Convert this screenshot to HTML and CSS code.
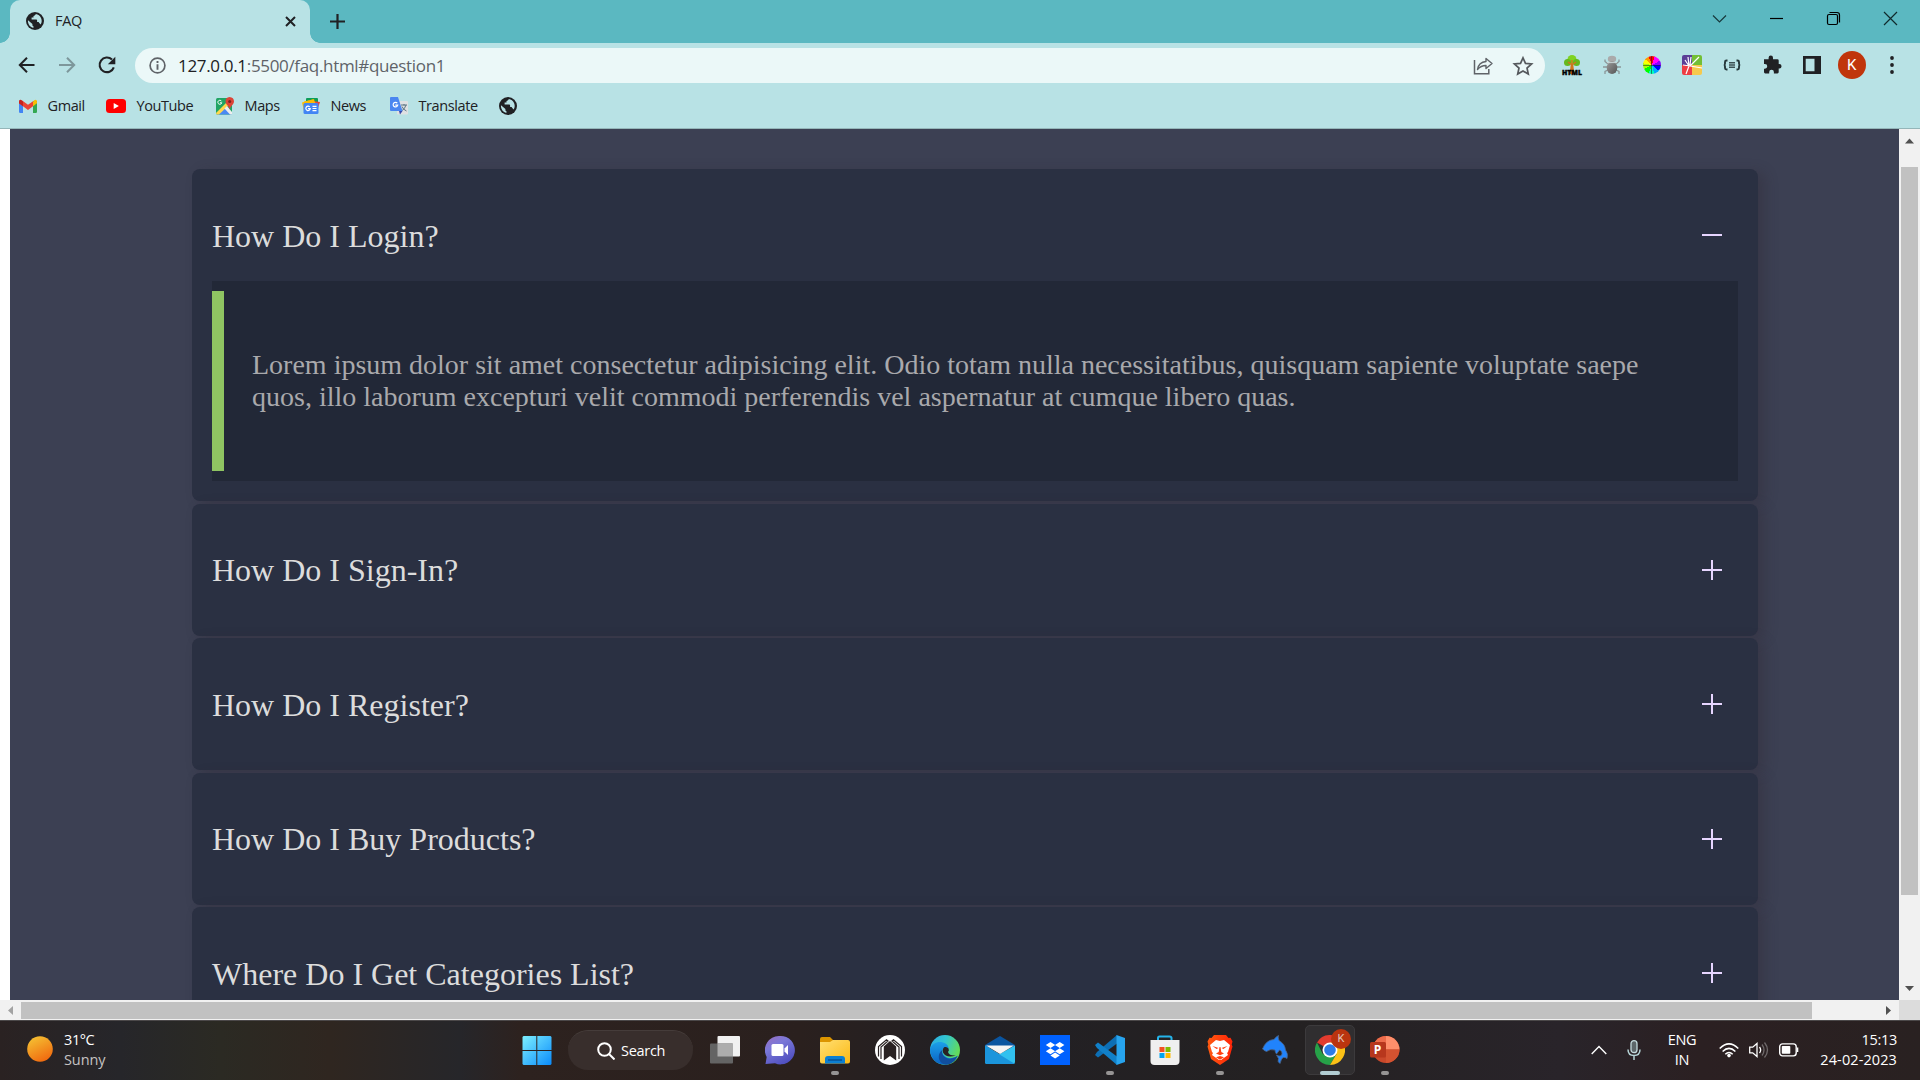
FILE: index.html
```html
<!DOCTYPE html>
<html lang="en">
<head>
<meta charset="utf-8">
<title>FAQ</title>
<link rel="stylesheet" href="styles.css">
</head>
<body>
<svg class="defs" width="0" height="0">
  <defs>
    <symbol id="globe" viewBox="0 0 18 18">
      <circle cx="9" cy="9" r="9" fill="#202124"/>
      <path d="M9.8 2c-.3 1.200-1.300 1.700-2.300 1.900v1.700H5.600v1.900h4.700c.5 0 .8.400.8.900v1.700h1c.6 0 1 .500 1.100 1l1.500 1.500A7.100 7.100 0 0 0 9.800 2zM2 8.200 6.400 12v1c0 .6.400 1 1 1v2A7 7 0 0 1 2 8.200z" fill="#b8e2e5"/>
    </symbol>
    <linearGradient id="win" x1="0" y1="0" x2="1" y2="1"><stop offset="0" stop-color="#7df0ff"/><stop offset="1" stop-color="#0a8bfb"/></linearGradient>
    <linearGradient id="sun" x1=".2" y1="0" x2=".7" y2="1"><stop offset="0" stop-color="#f5c233"/><stop offset="1" stop-color="#f0670e"/></linearGradient>
    <linearGradient id="chat" x1="0" y1="0" x2=".6" y2="1"><stop offset="0" stop-color="#9a6fc0"/><stop offset=".4" stop-color="#7b78d8"/><stop offset="1" stop-color="#5050c0"/></linearGradient>
    <linearGradient id="fold" x1="0" y1="0" x2="1" y2="1"><stop offset="0" stop-color="#ffdf73"/><stop offset="1" stop-color="#fcb914"/></linearGradient>
    <linearGradient id="edgeTop" x1="0" y1="0" x2="1" y2=".4"><stop offset="0" stop-color="#2ba9e8"/><stop offset=".5" stop-color="#32c5d0"/><stop offset="1" stop-color="#63dc5a"/></linearGradient>
    <linearGradient id="edgeLow" x1="0" y1="0" x2="0" y2="1"><stop offset="0" stop-color="#1ca0e8"/><stop offset="1" stop-color="#0a62c4"/></linearGradient>
    <linearGradient id="lion" x1="0" y1="0" x2="1" y2="0"><stop offset="0" stop-color="#ff5a10"/><stop offset="1" stop-color="#ff2408"/></linearGradient>
    <linearGradient id="bug" x1="0" y1="0" x2="1" y2="1"><stop offset="0" stop-color="#999"/><stop offset="1" stop-color="#555"/></linearGradient>
  </defs>
</svg>

<header class="chrome">
  <div class="tabstrip">
    <div class="tab">
      <svg class="favicon" width="18" height="18"><use href="#globe"/></svg>
      <span class="tab-title">FAQ</span>
      <svg width="11" height="11" viewBox="0 0 11 11"><path d="M1 1l9 9M10 1l-9 9" stroke="#202124" stroke-width="2"/></svg>
    </div>
    <svg class="newtab" width="15" height="15" viewBox="0 0 15 15"><path d="M7.500 0v15M0 7.500h15" stroke="#202124" stroke-width="2.200"/></svg>
    <div class="winctl">
      <svg width="57" height="37" viewBox="0 0 57 37"><path d="M22 15.500l6.500 6.500 6.500-6.500" fill="none" stroke="#17383b" stroke-width="1.200"/></svg>
      <svg width="57" height="37" viewBox="0 0 57 37"><path d="M22 18.500h13" stroke="#000" stroke-width="1.200"/></svg>
      <svg width="57" height="37" viewBox="0 0 57 37"><g fill="none" stroke="#000" stroke-width="1.200"><rect x="22.500" y="14.500" width="10" height="10" rx="1.500"/><path d="M24.500 12.500h7.500q2.500 0 2.500 2.500v7.500"/></g></svg>
      <svg width="57" height="37" viewBox="0 0 57 37"><path d="M22 12l13 13M35 12L22 25" stroke="#102a2c" stroke-width="1.200"/></svg>
    </div>
  </div>

  <div class="toolbar">
    <div class="nav">
      <svg width="40" height="40" viewBox="0 0 40 40"><path d="M27.500 20H13M20 12.800L12.800 20l7.200 7.200" fill="none" stroke="#202124" stroke-width="2"/></svg>
      <svg width="40" height="40" viewBox="0 0 40 40"><path d="M12 20h14.500M20 12.800l7.200 7.200-7.200 7.200" fill="none" stroke="#7d979b" stroke-width="2"/></svg>
      <svg width="40" height="40" viewBox="0 0 40 40"><path d="M26.800 22.300A7.300 7.300 0 1 1 25 14.600" fill="none" stroke="#202124" stroke-width="2.100"/><path d="M28.300 11.700v7.500h-7.500z" fill="#202124"/></svg>
    </div>
    <div class="omnibox">
      <svg width="17" height="17" viewBox="0 0 17 17"><circle cx="8.500" cy="8.500" r="7.400" fill="none" stroke="#5f6368" stroke-width="1.700"/><path d="M8.500 4.100v1.900M8.500 7.300v5.500" stroke="#5f6368" stroke-width="1.900"/></svg>
      <span class="url"><b>127.0.0.1</b>:5500/faq.html#question1</span>
      <svg width="40" height="35" viewBox="0 0 40 35"><path d="M11.500 12v13.800h14.300V21" fill="none" stroke="#5f6368" stroke-width="1.500"/><path d="M14.500 21.500c.8-5 4.500-7.700 8.500-8v-3l6 5-6 5v-3c-3.500 0-6 1-8.500 4z" fill="none" stroke="#5f6368" stroke-width="1.400" stroke-linejoin="round"/></svg>
      <svg width="40" height="35" viewBox="0 0 40 35"><path d="M20 9.800l2.500 5.600 6.100.6-4.600 4 1.300 6L20 22.900 14.700 26l1.300-6-4.600-4 6.100-.6z" fill="none" stroke="#55595d" stroke-width="1.700"/></svg>
    </div>
    <div class="extensions">
      <svg viewBox="0 0 40 40"><path d="M18.700 20h2.600l1.200 9h-5z" fill="#d8781d"/><circle cx="20" cy="14.500" r="4.500" fill="#7ed321"/><circle cx="15.500" cy="17.500" r="3.500" fill="#65b81c"/><circle cx="24.500" cy="17.500" r="3.500" fill="#65b81c"/><path d="M20 24v-9M20 20l4-3M20 20l-4-3" stroke="#cf731d" stroke-width="1.300"/><text x="10" y="29.500" textLength="20" lengthAdjust="spacingAndGlyphs" class="html-label">HTML</text></svg>
      <svg viewBox="0 0 40 40"><g fill="none" stroke="#8b9698" stroke-width="1.300"><path d="M16 19l-3-2.500v-2M24 19l3-2.500v-2M15 22h-4M25 22h4M16 25l-3 1.500v2.500M24 25l3 1.500v2.500"/></g><ellipse cx="20" cy="14" rx="4.200" ry="3.200" fill="#aaa"/><ellipse cx="20" cy="22.800" rx="5.300" ry="6.200" fill="url(#bug)"/><path d="M15 17.600h10" stroke="#c9d5d7" stroke-width="1"/></svg>
      <div class="ext-cell"><div class="wheel"></div></div>
      <svg viewBox="0 0 40 40"><path d="M10 20v-8q0-2 2-2h8v10z" fill="#5b3f96"/><path d="M20 10h8q2 0 2 2v8H20z" fill="#72bf35"/><path d="M10 20h10v10h-8q-2 0-2-2z" fill="#ee3d43"/><path d="M20 20h10v8q0 2-2 2h-8z" fill="#f6c94c"/><path d="M17 21l-1-9M18 20l1-8M17 21l-4-6M18 21l9-9M18 21l12 2M17 21l-3 8M18 21l-7-1" stroke="#fff" stroke-width="1.200"/></svg>
      <svg viewBox="0 0 40 40"><path d="M15.500 15.500h-1q-1.500 0-1.500 1.500v1.500q0 1.500-1.200 1.500 1.200 0 1.200 1.500V23q0 1.500 1.500 1.500h1M24.500 15.500h1q1.500 0 1.500 1.500v1.500q0 1.500 1.200 1.500-1.200 0-1.200 1.500V23q0 1.500-1.500 1.500h-1" fill="none" stroke="#26383b" stroke-width="1.900"/><path d="M17 17.800h6M17 20h6M17 22.300h6" stroke="#3b5053" stroke-width="1.400"/></svg>
      <svg viewBox="0 0 40 40"><path d="M12 14.200h4.600v-1.400a2.200 2.200 0 0 1 4.400 0v1.400h4.400q1.300 0 1.300 1.300V19h.6a2.200 2.200 0 0 1 0 4.500h-.6v3.600q0 1.300-1.300 1.300h-3.500V27a2.200 2.200 0 0 0-4.700 0v1.400h-3.900q-1.300 0-1.300-1.300v-3.400h.9a2.300 2.300 0 0 0 0-4.700H12z" fill="#202124"/></svg>
      <svg viewBox="0 0 40 40"><path d="M11 11h18v18H11zM13.700 13.700v12.600h8.800V13.700z" fill="#202124" fill-rule="evenodd"/></svg>
      <div class="ext-cell"><div class="avatar">K</div></div>
      <svg viewBox="0 0 40 40"><g fill="#202124"><circle cx="20" cy="13" r="1.900"/><circle cx="20" cy="20" r="1.900"/><circle cx="20" cy="27" r="1.900"/></g></svg>
    </div>
  </div>

  <nav class="bookmarks">
    <div class="bm gmail"><svg width="18" height="18" viewBox="0 0 18 18"><path d="M0 4h4v12H1.200Q0 16 0 14.800z" fill="#4285f4"/><path d="M14 4h4v10.800q0 1.200-1.200 1.200H14z" fill="#34a853"/><path d="M14 4.500l1.200-1.300Q18 1.600 18 5v1.200l-4 3z" fill="#fbbc04"/><path d="M0 6.200V5q0-3.400 2.800-1.800L9 7.800l5-3.600v5L9 13 4 9.200z" fill="#ea4335"/><path d="M0 6.200V5q0-2 1.500-2.200L4 4.500v4.700z" fill="#c5221f"/></svg><span>Gmail</span></div>
    <div class="bm youtube"><svg width="20" height="18" viewBox="0 0 20 18"><rect y="2" width="20" height="14" rx="3.500" fill="#f00"/><path d="M7.700 6v6l5.200-3z" fill="#fff"/></svg><span>YouTube</span></div>
    <div class="bm maps"><svg width="18" height="18" viewBox="0 0 18 18"><rect y="1" width="16" height="16.500" rx="1.500" fill="#1fa463"/><path d="M1 17.500L8.500 9l7.500 8.500z" fill="#4a89f3"/><path d="M0 16L12 4l2.500 2.500L3 17.500H1.500Q0 17.500 0 16z" fill="#ffd84d"/><path d="M8.500 11.500L11 9l5 6v2.500h-2z" fill="#eee"/><path d="M13.500 0Q18 .3 18 4.500c0 3-3.700 4.500-4.300 8-.6-3.500-4.200-5-4.200-8Q9.500.3 13.500 0z" fill="#dc4437"/><circle cx="13.700" cy="4.500" r="1.500" fill="#7b231e"/><path d="M5.600 4.300a2 2 0 1 0 .2 1.500H4" fill="none" stroke="#fff"/></svg><span>Maps</span></div>
    <div class="bm news"><svg width="18" height="18" viewBox="0 0 18 18"><rect x="4" y="1" width="12" height="8" rx="1" fill="#0c9d58"/><path d="M0 5.500l12-3.500 2 9-12 3z" fill="#ffbd00"/><path d="M7 3.500l11 1.500-3 9-8-3z" fill="#ea4335"/><path d="M2 4.500l9-2 3 4-11 2z" fill="#fbbc04"/><rect x="1.500" y="6" width="15" height="11" rx="1.500" fill="#4285f4"/><path d="M10.500 9.300h4M10.500 11.500h4M10.500 13.700h4" stroke="#fff" stroke-width="1.200"/><path d="M7.700 9.900a2.200 2.200 0 1 0 .5 1.800H6" fill="none" stroke="#fff" stroke-width="1.200"/></svg><span>News</span></div>
    <div class="bm translate"><svg width="18" height="18" viewBox="0 0 18 18"><rect x="7" y="4" width="11" height="13.500" rx="1" fill="#dfe1e3"/><path d="M11 8h6M14 7v1.500M16 8q-1 4-4.500 6M12 9.500q1 3 4.500 4.500" stroke="#5b7582" fill="none"/><path d="M1 0h7l4.500 14H1q-1 0-1-1V1q0-1 1-1z" fill="#4a86f0"/><path d="M9 14h3.500L10 17.500z" fill="#3849ab"/><path d="M7.300 6.200a2.300 2.300 0 1 0 .4 2H5.300" fill="none" stroke="#fff" stroke-width="1.200"/></svg><span>Translate</span></div>
    <svg width="18" height="18"><use href="#globe"/></svg>
  </nav>
</header>

<div class="viewport">
  <div class="gutter"></div>
  <main class="page">
    <section class="faq">
      <article class="card open">
        <h2 class="question">How Do I Login?<i class="toggle minus"></i></h2>
        <div class="answer"><p>Lorem ipsum dolor sit amet consectetur adipisicing elit. Odio totam nulla necessitatibus, quisquam sapiente voluptate saepe<br>quos, illo laborum excepturi velit commodi perferendis vel aspernatur at cumque libero quas.</p></div>
      </article>
      <article class="card"><h2 class="question">How Do I Sign-In?<i class="toggle"></i></h2></article>
      <article class="card"><h2 class="question">How Do I Register?<i class="toggle"></i></h2></article>
      <article class="card"><h2 class="question">How Do I Buy Products?<i class="toggle"></i></h2></article>
      <article class="card"><h2 class="question">Where Do I Get Categories List?<i class="toggle"></i></h2></article>
    </section>
  </main>
  <div class="vscroll">
    <svg width="21" height="38" viewBox="0 0 21 38"><path d="M6 14.500l4.500-5 4.500 5z" fill="#505050"/></svg>
    <div class="vthumb"></div>
    <svg class="down" width="21" height="24" viewBox="0 0 21 24"><path d="M6 10l4.500 5 4.500-5z" fill="#505050"/></svg>
  </div>
</div>
<div class="hscroll">
  <svg width="21" height="20" viewBox="0 0 21 20"><path d="M13 6v9l-5-4.500z" fill="#a3a3a3"/></svg>
  <div class="hthumb"></div>
  <svg class="right" width="21" height="20" viewBox="0 0 21 20"><path d="M8 6v9l5-4.500z" fill="#505050"/></svg>
  <div class="corner"></div>
</div>

<footer class="taskbar">
  <div class="weather">
    <svg width="26" height="26" viewBox="0 0 26 26"><circle cx="13" cy="13" r="12.800" fill="url(#sun)"/></svg>
    <div class="weather-text"><span>31°C</span><span class="muted">Sunny</span></div>
  </div>
  <div class="apps">
    <div class="app"><svg viewBox="0 0 30 30"><path d="M1.500 1H14.300v14H.5V2zM15.300 1h13.200l1 1v13H15.300zM.5 16h13.800v14H1.500l-1-1zM15.300 16h14.200v13l-1 1H15.300z" fill="url(#win)"/></svg></div>
    <div class="search"><svg width="18" height="18" viewBox="0 0 18 18"><circle cx="7.500" cy="7.500" r="6.300" fill="none" stroke="#fff" stroke-width="2"/><path d="M12 12l5.500 5.500" stroke="#fff" stroke-width="2"/></svg><span>Search</span></div>
    <div class="app"><svg viewBox="0 0 30 30"><rect x="7.500" y="1" width="22.500" height="20.500" rx="1" fill="#f1f1f1"/><rect y="8.500" width="23" height="20" rx="1" fill="#646464"/><path d="M7.500 8.500H23v13H7.500z" fill="#adadad"/></svg></div>
    <div class="app"><svg viewBox="0 0 30 30"><path d="M15 1a14.200 14.200 0 1 1-5 27.200L.5 29l1.200-7A14.200 14.200 0 0 1 15 1z" fill="url(#chat)"/><rect x="6.500" y="9" width="12" height="12" rx="1.500" fill="#fff"/><path d="M19.500 13.500l3.500-3.500v10l-3.500-3.500z" fill="#fff"/></svg></div>
    <div class="app running"><svg viewBox="0 0 30 30"><path d="M0 4q0-2 2-2h8l3 3h0v8H0z" fill="#dc9500"/><path d="M0 7h10l3-2h15q2 0 2 2v19.500q0 2-2 2H2q-2 0-2-2z" fill="url(#fold)"/><path d="M5 28.500V24q0-3 3-3h14q3 0 3 3v4.500z" fill="#0c7fd2"/><path d="M8 25h14" stroke="#064b8f" stroke-width="1.300"/></svg></div>
    <div class="app"><svg viewBox="0 0 30 30"><circle cx="15" cy="15" r="15" fill="#fff"/><path d="M8.800 25.500V11.500L15 6l6.200 5.500v14L15 21z" fill="#292223"/><path d="M3.500 21.500V11.500L11.500 4.800 13 6 6 12v12M26.500 21.500V11.500L18.500 4.800 17 6l7 6v12" stroke="#292223" stroke-width="1.200" fill="none"/></svg></div>
    <div class="app"><svg viewBox="0 0 30 30"><circle cx="15" cy="15" r="15" fill="url(#edgeTop)"/><path d="M0 14C2 8 8 6 13 7.500c4.500 1.300 6 4.500 5.500 6.500-1.500-2-5-2-6 1-1.400 5 5 9 9 8 3-.3 5-1.500 6.500-2.500C24 29.500 15 31 9 28.500 3 26 0 20 0 14z" fill="url(#edgeLow)"/><path d="M12.200 15c-1.300 6 4.500 9.500 9 8.500 2.800-.3 4.800-1.500 6.300-2.500-2 5-7 8.500-11.500 8.800C9 29 6 20 12.200 15z" fill="#104e9e"/><path d="M18 17q1.500-1.500.5-3.500-1.500-2.200-4-1.400-2.500 1.900-1.500 5.400 3 6 13 3-7 .500-8-3.500z" fill="#292223"/></svg></div>
    <div class="app"><svg viewBox="0 0 30 30"><path d="M0 10L15 1l15 9v3H0z" fill="#0a55a0"/><path d="M0 10.500l15 9-15 8z" fill="#34b9ea"/><path d="M30 10.500V27q0 2-2 2H2q-2 0-2-2z" fill="#31c1ef"/><path d="M0 10.500L30 29H2q-2 0-2-2z" fill="#1b95dc"/><path d="M1 10.500h28L15 19z" fill="#f4f4f4"/></svg></div>
    <div class="app"><svg viewBox="0 0 30 30"><path d="M0 0h30v30H0z" fill="#0061fe"/><path d="M10.500 7l4.700 3-4.700 3-4.700-3zM19.700 7l4.700 3-4.700 3-4.700-3zM10.500 13.200l4.700 3-4.700 3-4.700-3zM19.700 13.200l4.700 3-4.700 3-4.700-3zM15.100 17.500l4.700 3-4.700 3-4.700-3z" fill="#fff"/></svg></div>
    <div class="app running"><svg viewBox="0 0 30 30"><path d="M22 8.500L3 22.500 0 20l2-3L22 0z" fill="#0d6fb5"/><path d="M22 21.500L3 7.500 0 10l2 3 20 17z" fill="#1180c9"/><path d="M21.500 0L30 3v24l-8.500 3z" fill="#27a4ee"/></svg></div>
    <div class="app"><svg viewBox="0 0 30 30"><path d="M8 6V3q0-1.500 1.500-1.500h10Q21.500 1.500 21.500 3v3" fill="none" stroke="#25b4ea" stroke-width="2"/><path d="M.5 5h29v21q0 4-4 4h-21q-4 0-4-4z" fill="#efefef"/><path d="M9.500 12h5v5h-5z" fill="#f25022"/><path d="M15.500 12h5v5h-5z" fill="#7fba00"/><path d="M9.500 18h5v5h-5z" fill="#00a4ef"/><path d="M15.500 18h5v5h-5z" fill="#ffb900"/></svg></div>
    <div class="app running"><svg viewBox="0 0 30 30"><path d="M9 0h12l2.500 3 2-.3 2 3.800-.8 3 .8 2-3.500 12.500L15 30l-9-6-3.500-12.500.8-2-.8-3 2-3.800 2 .3z" fill="url(#lion)"/><path d="M11 5l4 1 4-1 6 5-2 7-1 1 1 2-7 5h-2l-7-5 1-2-1-1-2-7z" fill="#fff"/><path d="M7.500 11l6 2-2 1zM22.500 11l-6 2 2 1zM14.500 12h1l.8 5 2.700 1.500-4 1.700-4-1.700 2.700-1.500zM11 22.300l4-1.300 4 1.300-4 2.400z" fill="#ff4012"/></svg></div>
    <div class="app"><svg viewBox="0 0 30 30"><path d="M2.500 14Q6 5 14 4.500q1.500-2.500 4.500-4-.7 2 .5 5 6 3.500 6.500 9.500 3 3.500 1.500 8.500-2-1.500-3.500-1-2 0-3.500 6-3-1.500-1.500-5l-2-3.500q4.500 2.500 5.500-1 .5-3-2.500-4l-3 4q-1.500-1.500-1.500-4-5-1.300-8.500 1.500-3-1-3.500-2.500z" fill="#2183fb" stroke="#4c668a" stroke-width=".8"/></svg></div>
    <div class="app active"><svg viewBox="0 0 30 30"><path d="M15 15L2 7.500A15 15 0 0 1 28 7.500H15z" fill="#e33b2e"/><path d="M15 15l-7 4.500L2 7.500A15 15 0 0 0 15 30l6.500-11z" fill="#26a148"/><path d="M15 15V7.500h13A15 15 0 0 1 15 30l6.500-11z" fill="#fbc116"/><circle cx="15" cy="15" r="7.500" fill="#fff"/><circle cx="15" cy="15" r="5.800" fill="#2d7be8"/></svg><span class="badge">K</span></div>
    <div class="app running"><svg viewBox="0 0 30 30"><circle cx="16" cy="14.500" r="13.500" fill="#c9482a"/><path d="M16 1a13.500 13.500 0 0 0-13.500 13.500H16z" fill="#ec6c4b"/><path d="M16 1v13.500h13.500A13.500 13.500 0 0 0 16 1z" fill="#ff8f6b"/><path d="M16 14.500h13.500A13.500 13.500 0 0 1 16 28z" fill="#d35230"/><rect y="7" width="16" height="15.500" rx="1.500" fill="#b7371d"/><text x="7.500" y="19.300" text-anchor="middle" class="ppt">P</text></svg></div>
  </div>
  <div class="tray">
    <svg class="caret" width="16" height="10" viewBox="0 0 16 10"><path d="M.7 9L8 1.500 15.300 9" fill="none" stroke="#fff" stroke-width="1.400"/></svg>
    <svg class="mic" width="14" height="20" viewBox="0 0 14 20"><rect x="4" y=".7" width="6" height="12" rx="3" fill="#5d6669" stroke="#c4dadd" stroke-width="1.300"/><path d="M1 9.500q0 6 6 6t6-6M7 15.500V20" fill="none" stroke="#b5d3d6" stroke-width="1.500"/></svg>
    <div class="lang"><span>ENG</span><span>IN</span></div>
    <svg class="wifi" width="20" height="15" viewBox="0 0 20 15"><g fill="none" stroke="#fff" stroke-width="1.500"><path d="M.7 5.500q9.300-9.200 18.600 0M3.600 8.500q6.400-6.300 12.800 0M6.300 11.300q3.700-3.600 7.400 0"/></g><circle cx="10" cy="12.600" r="1.800" fill="#fff"/></svg>
    <svg class="vol" width="20" height="18" viewBox="0 0 20 18"><path d="M.7 6.200h3L8 2.500v13l-4.300-3.700h-3zM10.500 6q2.300 3 0 6" fill="none" stroke="#fff" stroke-width="1.300"/><path d="M13 3.500q4 5.500 0 11M15.500 1.500q6 7.500 0 15" fill="none" stroke="#6e6869" stroke-width="1.300"/></svg>
    <svg class="batt" width="20" height="14" viewBox="0 0 20 14"><rect x=".7" y=".9" width="16.500" height="12" rx="2.800" fill="none" stroke="#fff" stroke-width="1.400"/><rect x="2.800" y="3" width="8.500" height="7.800" rx=".8" fill="#fff"/><path d="M18 4.500h1.300v4.600H18z" fill="#fff"/></svg>
    <div class="clock"><span>15:13</span><span class="date">24-02-2023</span></div>
  </div>
</footer>
</body>
</html>
```
FILE: styles.css
```css
* { box-sizing: border-box; }
body {
  margin: 0;
  width: 1920px;
  height: 1080px;
  overflow: hidden;
  display: flex;
  flex-direction: column;
  font-family: "Open Sans", "Noto Sans", sans-serif;
  background: #fff;
}
.defs { position: absolute; }
svg { flex: none; display: block; }

/* browser frame */
.chrome {
  height: 129px;
  flex: none;
  background: #b8e2e5;
  border-bottom: 1px solid #94b6b9;
  color: #202124;
}
.tabstrip {
  height: 43px;
  display: flex;
  background: #5bb8c1;
}
.tab {
  position: relative;
  width: 300px;
  margin-left: 10px;
  padding: 0 14px 1px 16px;
  display: flex;
  align-items: center;
  background: #b8e2e5;
  border-radius: 10px 10px 0 0;
}
.tab::before, .tab::after {
  content: "";
  position: absolute;
  bottom: 0;
  width: 10px;
  height: 10px;
}
.tab::before { left: -10px; background: radial-gradient(circle at 0 0, transparent 9.5px, #b8e2e5 10px); }
.tab::after { right: -10px; background: radial-gradient(circle at 100% 0, transparent 9.5px, #b8e2e5 10px); }
.tab-title { flex: 1; margin: 0 0 1px 11px; font-size: 14.500px; letter-spacing: -0.3px; }
.newtab { margin: 14px 0 0 20px; }
.winctl { display: flex; margin: 0 1px 0 auto; }

.toolbar { height: 44px; display: flex; align-items: center; }
.nav { display: flex; width: 135px; padding-left: 7px; }
.omnibox {
  width: 1410px;
  height: 35px;
  margin-top: 1px;
  padding: 0 2px 0 14px;
  display: flex;
  align-items: center;
  border-radius: 18px;
  background: #ebf8f8;
}
.url { flex: 1; margin-left: 12px; font-size: 17px; letter-spacing: -0.33px; color: #5f6368; white-space: nowrap; }
.url b { font-weight: 400; color: #202124; }
.extensions { display: flex; margin-left: 6.700px; }
.extensions svg, .ext-cell { width: 40px; height: 40px; }
.ext-cell { display: flex; align-items: center; justify-content: center; }
.html-label { font: 900 7px "Open Sans", sans-serif; stroke: #000; stroke-width: .4; }
.wheel {
  width: 18px;
  height: 18px;
  border-radius: 50%;
  background:
    linear-gradient(#2228, #2228) center / 1px 18px no-repeat,
    linear-gradient(#2228, #2228) center / 18px 1px no-repeat,
    conic-gradient(#f00 0 5%, #f0f 5% 17%, #80f 17% 26%, #00f 26% 36%, #0af 36% 46%, #0fb 46% 56%, #0f0 56% 68%, #af0 68% 78%, #ff0 78% 86%, #f90 86% 94%, #f00 94%);
}
.avatar {
  width: 28px;
  height: 28px;
  border-radius: 50%;
  background: #c0350b;
  color: #fff;
  font: 15px/28px Roboto, sans-serif;
  text-align: center;
}

.bookmarks { height: 38px; display: flex; align-items: center; padding-left: 19px; font-size: 14.500px; letter-spacing: -0.4px; }
.bm { display: flex; align-items: center; gap: 10.500px; white-space: nowrap; }
.bm span { margin-bottom: 2px; }
.gmail { width: 87px; }
.youtube { width: 110px; }
.maps { width: 86px; }
.news { width: 88px; }
.translate { width: 109px; }

/* FAQ page */
.viewport { height: 871px; flex: none; display: flex; overflow: hidden; }
.gutter { width: 10px; background: #fff; }
.page { width: 1889px; padding: 40px 141px 0 182px; background: #3c4053; overflow: hidden; }
.faq { display: flex; flex-direction: column; gap: 2.500px; }
.card {
  flex: none;
  height: 131.950px;
  padding: 20px;
  border-radius: 8px;
  background: #2a3042;
  box-shadow: 7px 3px 13px rgba(46, 38, 48, .3);
}
.card.open { height: 332.250px; }
.question {
  height: 92px;
  margin: 0;
  padding: 2px 16px 0 0;
  display: flex;
  align-items: center;
  justify-content: space-between;
  font: 400 32px "Liberation Serif", serif;
  color: #dcdcdc;
}
.toggle {
  width: 20px;
  height: 20px;
  margin-bottom: 2px;
  background:
    linear-gradient(#e6d5ff, #e6d5ff) center / 20px 2px no-repeat,
    linear-gradient(#e6d5ff, #e6d5ff) center / 2px 20px no-repeat;
}
.toggle.minus { background: linear-gradient(#e6d5ff, #e6d5ff) center / 20px 2px no-repeat; }
.answer {
  height: 200px;
  padding: 10px 0;
  background: #222837;
}
.answer p {
  height: 180px;
  margin: 0;
  padding: 58px 0 0 28px;
  border-left: 12px solid #8fc462;
  font: 28px/32px "Liberation Serif", serif;
  color: #a9a9ac;
  white-space: nowrap;
}

/* scrollbars */
.vscroll { width: 21px; background: #f1f1f1; display: flex; flex-direction: column; }
.vthumb { width: 17px; height: 728px; margin-left: 2px; background: #c1c1c1; }
.down { margin-top: auto; }
.hscroll { height: 20px; flex: none; display: flex; align-items: stretch; background: #f1f1f1; }
.hthumb { width: 1791px; height: 17px; margin-top: 2px; background: #c1c1c1; }
.right { margin-left: auto; }
.corner { width: 21px; background: #dcdcdc; }

/* taskbar */
.taskbar {
  height: 60px;
  flex: none;
  display: flex;
  border-top: 1px solid #4b4849;
  background: linear-gradient(90deg, #2a2222 0, #26262a 120px, #2b2a23 220px, #2f2620 330px, #26262a 460px, #2d221f 520px, #2a201e 800px, #222024 960px, #242122 1300px, #29242a 1560px, #2b2022 1700px, #292121 1920px);
  color: #fff;
  font-size: 14.500px;
  line-height: 20px;
}
.weather { width: 509px; padding: 0 0 1px 27px; display: flex; align-items: center; gap: 11px; letter-spacing: -0.4px; }
.weather svg { margin-top: -2px; }
.weather-text { display: flex; flex-direction: column; }
.muted { color: #c5c2c2; letter-spacing: -0.1px; }
.apps { display: flex; align-items: center; height: 59px; padding-bottom: 1px; }
.app { position: relative; width: 55px; height: 58px; display: flex; align-items: center; justify-content: center; }
.app svg { width: 30px; height: 30px; }
.search {
  width: 125px;
  height: 40px;
  margin: 0 4px;
  display: flex;
  align-items: center;
  gap: 6px;
  padding-left: 29px;
  border-radius: 20px;
  background: #382e2c;
  border-top: 1px solid #453c3a;
  letter-spacing: -0.3px;
}
.running::after, .active::after {
  content: "";
  position: absolute;
  left: 23.500px;
  bottom: 4px;
  width: 8px;
  height: 4px;
  border-radius: 2px;
  background: #969494;
}
.active::before {
  content: "";
  position: absolute;
  inset: 4px 2.500px;
  border: 1px solid #3c3a3c;
  border-radius: 5px;
  background: #302e30;
}
.active svg { position: relative; }
.active::after { left: 17.500px; width: 20px; background: #b2cdd3; }
.badge {
  position: absolute;
  left: 29px;
  top: 8px;
  width: 20px;
  height: 20px;
  border-radius: 50%;
  background: #ba340f;
  color: #e4c4b8;
  font: 11px/20px Roboto, sans-serif;
  text-align: center;
}
.ppt { font: 700 12px "Open Sans", sans-serif; fill: #fff; }
.tray { display: flex; align-items: center; margin-left: auto; padding: 0 23px 1px 0; letter-spacing: -0.3px; }
.mic { margin-left: 20px; }
.lang { width: 32px; margin-left: 25px; display: flex; flex-direction: column; align-items: center; }
.wifi { margin-left: 21px; }
.vol { margin-left: 10px; }
.batt { margin-left: 10px; }
.clock { width: 98px; display: flex; flex-direction: column; align-items: flex-end; }
.date { letter-spacing: 0.1px; }
```
